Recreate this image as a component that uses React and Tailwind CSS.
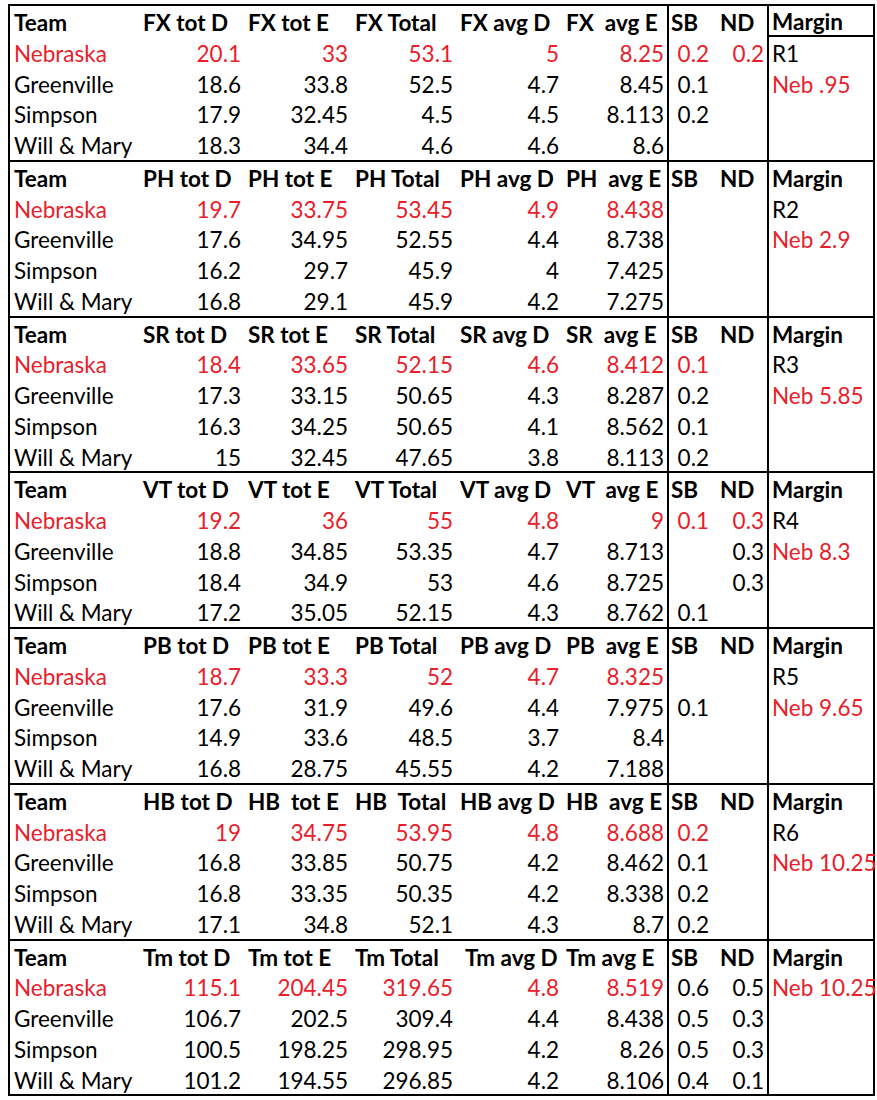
import React from "react";

const R = "text-[#e8202a]";

const sections = [
  {
    h: ["FX tot D", "FX tot E", "FX Total", "FX avg D", "FX  avg E"],
    underline: true,
    rows: [
      { t: "Nebraska", red: true, v: ["20.1", "33", "53.1", "5", "8.25"], sb: ["0.2", true], nd: ["0.2", true], m: ["R1", false] },
      { t: "Greenville", v: ["18.6", "33.8", "52.5", "4.7", "8.45"], sb: ["0.1"], m: ["Neb .95", true] },
      { t: "Simpson", v: ["17.9", "32.45", "4.5", "4.5", "8.113"], sb: ["0.2"] },
      { t: "Will & Mary", v: ["18.3", "34.4", "4.6", "4.6", "8.6"] },
    ],
  },
  {
    h: ["PH tot D", "PH tot E", "PH Total", "PH avg D", "PH  avg E"],
    rows: [
      { t: "Nebraska", red: true, v: ["19.7", "33.75", "53.45", "4.9", "8.438"], m: ["R2", false] },
      { t: "Greenville", v: ["17.6", "34.95", "52.55", "4.4", "8.738"], m: ["Neb 2.9", true] },
      { t: "Simpson", v: ["16.2", "29.7", "45.9", "4", "7.425"] },
      { t: "Will & Mary", v: ["16.8", "29.1", "45.9", "4.2", "7.275"] },
    ],
  },
  {
    h: ["SR tot D", "SR tot E", "SR Total", "SR avg D", "SR  avg E"],
    rows: [
      { t: "Nebraska", red: true, v: ["18.4", "33.65", "52.15", "4.6", "8.412"], sb: ["0.1", true], m: ["R3", false] },
      { t: "Greenville", v: ["17.3", "33.15", "50.65", "4.3", "8.287"], sb: ["0.2"], m: ["Neb 5.85", true] },
      { t: "Simpson", v: ["16.3", "34.25", "50.65", "4.1", "8.562"], sb: ["0.1"] },
      { t: "Will & Mary", v: ["15", "32.45", "47.65", "3.8", "8.113"], sb: ["0.2"] },
    ],
  },
  {
    h: ["VT tot D", "VT tot E", "VT Total", "VT avg D", "VT  avg E"],
    rows: [
      { t: "Nebraska", red: true, v: ["19.2", "36", "55", "4.8", "9"], sb: ["0.1", true], nd: ["0.3", true], m: ["R4", false] },
      { t: "Greenville", v: ["18.8", "34.85", "53.35", "4.7", "8.713"], nd: ["0.3"], m: ["Neb 8.3", true] },
      { t: "Simpson", v: ["18.4", "34.9", "53", "4.6", "8.725"], nd: ["0.3"] },
      { t: "Will & Mary", v: ["17.2", "35.05", "52.15", "4.3", "8.762"], sb: ["0.1"] },
    ],
  },
  {
    h: ["PB tot D", "PB tot E", "PB Total", "PB avg D", "PB  avg E"],
    rows: [
      { t: "Nebraska", red: true, v: ["18.7", "33.3", "52", "4.7", "8.325"], m: ["R5", false] },
      { t: "Greenville", v: ["17.6", "31.9", "49.6", "4.4", "7.975"], sb: ["0.1"], m: ["Neb 9.65", true] },
      { t: "Simpson", v: ["14.9", "33.6", "48.5", "3.7", "8.4"] },
      { t: "Will & Mary", v: ["16.8", "28.75", "45.55", "4.2", "7.188"] },
    ],
  },
  {
    h: ["HB tot D", "HB  tot E", "HB  Total", "HB avg D", "HB  avg E"],
    rows: [
      { t: "Nebraska", red: true, v: ["19", "34.75", "53.95", "4.8", "8.688"], sb: ["0.2", true], m: ["R6", false] },
      { t: "Greenville", v: ["16.8", "33.85", "50.75", "4.2", "8.462"], sb: ["0.1"], m: ["Neb 10.25", true] },
      { t: "Simpson", v: ["16.8", "33.35", "50.35", "4.2", "8.338"], sb: ["0.2"] },
      { t: "Will & Mary", v: ["17.1", "34.8", "52.1", "4.3", "8.7"], sb: ["0.2"] },
    ],
  },
  {
    h: ["Tm tot D", "Tm tot E", "Tm Total", "Tm avg D", "Tm avg E"],
    tm: true,
    rows: [
      { t: "Nebraska", red: true, v: ["115.1", "204.45", "319.65", "4.8", "8.519"], sb: ["0.6"], nd: ["0.5"], m: ["Neb 10.25", true] },
      { t: "Greenville", v: ["106.7", "202.5", "309.4", "4.4", "8.438"], sb: ["0.5"], nd: ["0.3"] },
      { t: "Simpson", v: ["100.5", "198.25", "298.95", "4.2", "8.26"], sb: ["0.5"], nd: ["0.3"] },
      { t: "Will & Mary", v: ["101.2", "194.55", "296.85", "4.2", "8.106"], sb: ["0.4"], nd: ["0.1"] },
    ],
  },
];

const W = ["w-[105px]", "w-[107px]", "w-[105px]", "w-[106px]", "w-[105px]"];

function Row({ children }) {
  return <div className="flex h-[30.75px]">{children}</div>;
}

const C = "flex items-center pt-[4px]";

function Section({ s, first }) {
  return (
    <div className={first ? "" : "border-t-2 border-black"}>
      <Row>
        <div className={`w-[129px] ${C} pl-[4px] font-bold`}>Team</div>
        {s.h.map((h, i) => (
          <div
            key={i}
            className={`${W[i]} ${C} ${s.tm && i === 3 ? "pl-[9px]" : "pl-[4px]"} font-bold whitespace-pre`}
          >
            {h}
          </div>
        ))}
        <div className={`w-[47px] border-l-2 border-black ${C} pl-[2px] font-bold`}>SB</div>
        <div className={`w-[53px] ${C} pl-[6px] font-bold`}>ND</div>
        <div
          className={`w-[106px] border-l-2 border-black ${C} pl-[3px] font-bold ${
            s.underline ? "border-b-2" : ""
          }`}
        >
          Margin
        </div>
      </Row>
      {s.rows.map((r, ri) => (
        <Row key={ri}>
          <div className={`w-[129px] ${C} pl-[4px] ${r.red ? R : ""}`}>{r.t}</div>
          {r.v.map((v, i) => (
            <div key={i} className={`${W[i]} ${C} justify-end pr-[3px] ${r.red ? R : ""}`}>
              {v}
            </div>
          ))}
          <div
            className={`w-[47px] border-l-2 border-black ${C} justify-end pr-[5px] ${
              r.sb && r.sb[1] ? R : ""
            }`}
          >
            {r.sb ? r.sb[0] : ""}
          </div>
          <div className={`w-[53px] ${C} justify-end pr-[3px] ${r.nd && r.nd[1] ? R : ""}`}>
            {r.nd ? r.nd[0] : ""}
          </div>
          <div
            className={`w-[106px] border-l-2 border-black ${C} pl-[3px] whitespace-nowrap ${
              r.m && r.m[1] ? R : ""
            }`}
          >
            {r.m ? r.m[0] : ""}
          </div>
        </Row>
      ))}
    </div>
  );
}

export default function App() {
  return (
    <div
      className="bg-white w-[877px] h-[1100px] pl-[8px] pt-[4px] text-black text-[22.5px] leading-none"
      style={{ fontFamily: "Lato, 'Liberation Sans', sans-serif" }}
    >
      <div className="w-[867px] border-2 border-black">
        {sections.map((s, i) => (
          <Section key={i} s={s} first={i === 0} />
        ))}
      </div>
    </div>
  );
}
